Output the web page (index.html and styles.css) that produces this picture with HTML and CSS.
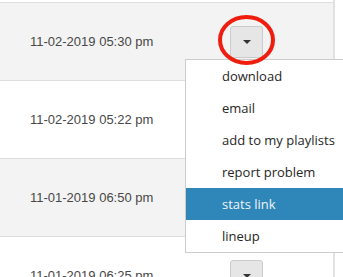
FILE: index.html
```html
<!DOCTYPE html>
<html>
<head>
	<title>recordings</title>
	<meta charset="UTF-8">
	<link rel="stylesheet" href="styles.css">
</head>
<body>
	<div class="page">
		<div class="list">
			<div class="stub"></div>
			<div class="row odd">
				<div class="date">11-02-2019 05:30 pm</div>
				<a class="btn" href="javascript:;"><span class="caret"></span></a>
			</div>
			<div class="row">
				<div class="date">11-02-2019 05:22 pm</div>
				<a class="btn" href="javascript:;"><span class="caret"></span></a>
			</div>
			<div class="row odd">
				<div class="date">11-01-2019 06:50 pm</div>
				<a class="btn" href="javascript:;"><span class="caret"></span></a>
			</div>
			<div class="row">
				<div class="date">11-01-2019 06:25 pm</div>
				<a class="btn" href="javascript:;"><span class="caret"></span></a>
			</div>
		</div>

		<!-- dropdown opened from the first row -->
		<ul class="menu">
			<li><a href="#">download</a></li>
			<li><a href="#">email</a></li>
			<li><a href="#">add to my playlists</a></li>
			<li><a href="#">report problem</a></li>
			<li class="active"><a href="#">stats link</a></li>
			<li><a href="#">lineup</a></li>
		</ul>

		<svg class="mark" width="57" height="50" viewBox="0 0 57 50">
			<ellipse cx="28.5" cy="25" rx="26.5" ry="23" fill="none" stroke="#ee1d0e" stroke-width="4"/>
		</svg>
	</div>
</body>
</html>
```

FILE: styles.css
```css
*{
	margin: 0;
	padding: 0;
	box-sizing: border-box;
}
a{
	text-decoration: none;
}
li{
	list-style: none;
}
body{
	background: #fff;
	font-family: "Liberation Sans", Arial, sans-serif;
	overflow: hidden;
}
.page{
	position: relative;
	width: 343px;
	height: 277px;
}
.list{
	width: 335px;
	border-right: 2px solid #e2e2e2;
}
.stub{
	height: 2px;
}
.row{
	display: flex;
	align-items: center;
	height: 78px;
	border-top: 1px solid #dedede;
}
.row.odd{
	background: #f3f3f3;
}
.date{
	width: 230px;
	padding-left: 30px;
	font-size: 13px;
	color: #474747;
}
.btn{
	display: flex;
	align-items: center;
	justify-content: center;
	width: 33px;
	height: 32px;
	background: #e6e6e6;
	border: 1px solid #cbcbcb;
	border-radius: 3px;
}
.caret{
	width: 0;
	height: 0;
	border-top: 4px solid #333;
	border-left: 4px solid transparent;
	border-right: 4px solid transparent;
}
.menu{
	position: absolute;
	left: 185px;
	top: 59px;
	width: 180px;
	background: #fff;
	border: 1px solid #cccccc;
	font-family: "Open Sans", "Noto Sans", sans-serif;
	font-size: 13px;
}
.menu a{
	display: block;
	height: 32px;
	line-height: 32px;
	padding-left: 36px;
	color: #262626;
}
.menu .active a{
	background: #2e86b9;
	color: #eef4f8;
}
.mark{
	position: absolute;
	left: 218px;
	top: 15px;
}
```
